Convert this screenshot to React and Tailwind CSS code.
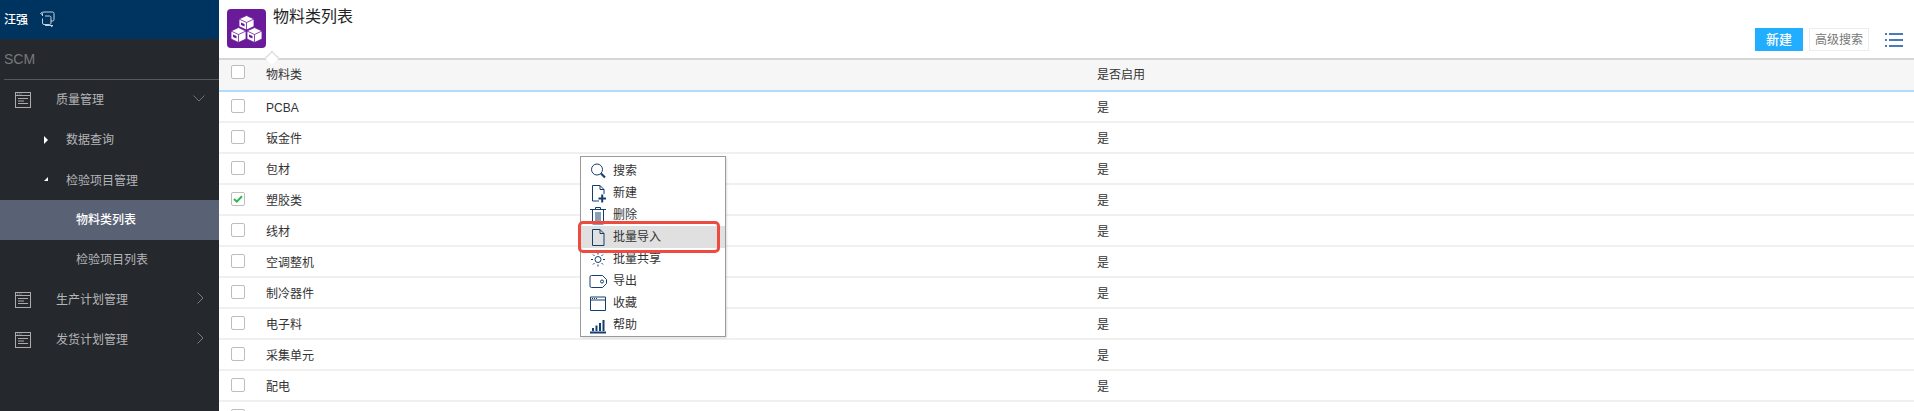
import React from "react";

const font = "font-['Liberation_Sans','Noto_Sans_CJK_SC',sans-serif]";

const rows = [
  { name: "PCBA" },
  { name: "钣金件" },
  { name: "包材" },
  { name: "塑胶类", checked: true },
  { name: "线材" },
  { name: "空调整机" },
  { name: "制冷器件" },
  { name: "电子料" },
  { name: "采集单元" },
  { name: "配电" },
  { name: "" },
];

function PageIcon() {
  return (
    <svg width="16" height="16" viewBox="0 0 16 16" fill="none" stroke="#a9abad" strokeWidth="1" className="shrink-0">
      <rect x="0.5" y="0.5" width="15" height="15" />
      <path d="M0.5 3.5H15.5M2 2H2.8M3.8 2H4.6M5.6 2H6.4M3 6.5H13M3 9H9M3 11.5H13" />
    </svg>
  );
}

function Chevron({ down }) {
  return down ? (
    <svg width="12" height="7" viewBox="0 0 12 7" fill="none" stroke="#6f7276" className="absolute left-[193px] top-[95px]">
      <path d="M0.5 0.5L6 6L11.5 0.5" />
    </svg>
  ) : (
    <svg width="7" height="12" viewBox="0 0 7 12" fill="none" stroke="#7b7e82" className="absolute right-[15px] top-[12px]">
      <path d="M0.5 0.5L6 6L0.5 11.5" />
    </svg>
  );
}

function Checkbox({ checked }) {
  return (
    <div className="flex h-[14px] w-[14px] items-center justify-center rounded-[2px] border border-[#bdbdbd] bg-white">
      {checked && (
        <svg width="10" height="8" viewBox="0 0 10 8" fill="none" stroke="#2fb84f" strokeWidth="2">
          <path d="M1 4L3.8 6.6L9 1.2" />
        </svg>
      )}
    </div>
  );
}

function Sidebar() {
  return (
    <aside className="relative h-full w-[219px] shrink-0 bg-[#25282d] text-[12px] text-[#b4b5b7]">
      <div className="flex h-[39px] items-center bg-[#003460] pl-[4px] text-white">
        <span className="font-medium">汪强</span>
        <svg width="15" height="17" viewBox="0 0 15 17" fill="none" stroke="#c5d0da" strokeWidth="1" className="ml-[12px]">
          <path d="M2.5 5V2.5A1.5 1.5 0 0 1 4 1H12.5A1.5 1.5 0 0 1 14 2.5V8.5A1.5 1.5 0 0 1 12.5 10H11V12A1.5 1.5 0 0 1 9.5 13.5H4A1.5 1.5 0 0 1 2.5 12V7.5" />
          <path d="M0.5 2.5L2.5 1M0.5 2.5L3 4M5 14.5H13M13 14.5L11 16" />
          <path d="M5 5H9.5A1.5 1.5 0 0 1 11 6.5V10" />
        </svg>
      </div>
      <div className="ml-[4px] flex h-[41px] items-center border-b border-[#55585c] text-[14px] text-[#77797c]">SCM</div>
      <div className="relative flex h-[40px] items-center pl-[15px]">
        <PageIcon />
        <span className="ml-[25px]">质量管理</span>
      </div>
      <Chevron down />
      <div className="relative flex h-[40px] items-center pl-[66px]">
        <span className="absolute left-[44px] top-[16px] h-0 w-0 border-y-[4px] border-l-[4px] border-y-transparent border-l-white" />
        数据查询
      </div>
      <div className="relative flex h-[40px] items-center pl-[66px] pt-[2px]">
        <span className="absolute left-[44px] top-[17px] h-0 w-0 border-b-[4px] border-l-[4px] border-b-white border-l-transparent" />
        检验项目管理
      </div>
      <div className="flex h-[40px] items-center bg-[#596274] pl-[76px] font-medium text-white">物料类列表</div>
      <div className="flex h-[40px] items-center pl-[76px]">检验项目列表</div>
      <div className="relative flex h-[40px] items-center pl-[15px]">
        <PageIcon />
        <span className="ml-[25px]">生产计划管理</span>
        <Chevron />
      </div>
      <div className="relative flex h-[40px] items-center pl-[15px]">
        <PageIcon />
        <span className="ml-[25px]">发货计划管理</span>
        <Chevron />
      </div>
    </aside>
  );
}

function CubeLogo() {
  return (
    <div className="flex h-[39px] w-[39px] items-center justify-center rounded-[4px] bg-[#6a1b9a]">
      <svg width="33" height="28" viewBox="0 0 33 28" fill="white" stroke="#6a1b9a" strokeWidth="0.8">
        <path d="M16.5 0.5L24 4V11.5L16.5 15L9 11.5V4Z" />
        <path d="M8.5 12.5L16 16V24L8.5 27.5L1 24V16Z" />
        <path d="M24.5 12.5L32 16V24L24.5 27.5L17 24V16Z" />
        <path d="M9 4L16.5 7.5L24 4M16.5 7.5V15M1 16L8.5 19.5L16 16M8.5 19.5V27.5M17 16L24.5 19.5L32 16M24.5 19.5V27.5" fill="none" />
        <path d="M3 19.5L6.5 21V23.5L3 22ZM19 19.5L22.5 21V23.5L19 22ZM11 7.5L14.5 9V11.5L11 10Z" fill="#6a1b9a" stroke="none" />
      </svg>
    </div>
  );
}

function Header() {
  return (
    <div className="flex h-[58px] shrink-0 bg-white">
      <div className="ml-[8px] mt-[9px]">
        <CubeLogo />
      </div>
      <h1 className="ml-[7px] mt-[6px] text-[16px] leading-[22px] text-[#222]">物料类列表</h1>
      <div className="ml-auto mr-[11px] mt-[28px] flex items-start">
        <button className="h-[23px] w-[48px] bg-[#22aeff] text-[13px] font-medium text-white">新建</button>
        <button className="ml-[6px] h-[23px] w-[60px] border border-[#ededed] text-[12px] text-[#777]">高级搜索</button>
        <svg width="18" height="14" viewBox="0 0 18 14" className="ml-[16px] mt-[5px]" fill="#4a7bb9">
          <path d="M0 0H2V2H0ZM4 0H18V2H4ZM0 6H2V8H0ZM4 6H18V8H4ZM0 12H2V14H0ZM4 12H18V14H4Z" />
        </svg>
      </div>
    </div>
  );
}

function Table() {
  return (
    <div className="text-[12px] text-[#333]">
      <div className="relative flex h-[34px] items-center border-t-2 border-b-2 border-t-[#d6d6d6] border-b-[#aedcff] bg-[#f6f6f6]">
        <span className="absolute left-[48px] top-[-7px] h-[10px] w-[10px] rotate-45 border-l border-t border-[#d6d6d6] bg-white" />
        <div className="mb-[6px] w-[47px] pl-[12px]">
          <Checkbox />
        </div>
        <div className="w-[831px]">物料类</div>
        <div>是否启用</div>
      </div>
      {rows.map((row, i) => (
        <div key={i} className="flex h-[31px] border-b-2 border-[#f0f0f0] pt-[7px]">
          <div className="w-[47px] pl-[12px]">
            <Checkbox checked={row.checked} />
          </div>
          <div className="w-[831px] leading-[18px]">{row.name}</div>
          <div className="leading-[18px]">{row.name && "是"}</div>
        </div>
      ))}
    </div>
  );
}

const menuColor = "#123f6e";
const menuItems = [
  {
    label: "搜索",
    icon: (
      <>
        <circle cx="8" cy="7.5" r="5.5" />
        <path d="M12 11.5L16 15.5" strokeWidth="2.2" />
      </>
    ),
  },
  {
    label: "新建",
    icon: (
      <>
        <path d="M10 17H3.5V1.5H11L15 5.5V10M11 1.5V5.5H15" />
        <path d="M9.5 14.5H17M13.2 10.5V18.5" strokeWidth="2" />
      </>
    ),
  },
  {
    label: "删除",
    icon: <path d="M1 3.5H17M6.5 3.5V1.5H11.5V3.5M3.5 3.5V18H14.5V3.5M7 6V16M9 6V16M11 6V16" />,
  },
  { label: "批量导入", active: true, icon: <path d="M3.5 17.5H15V5.5L11 1.5H3.5ZM11 1.5V5.5H15" /> },
  {
    label: "批量共享",
    icon: (
      <>
        <circle cx="9" cy="9.5" r="3" />
        <path d="M9 2.5V4.5M9 14.5V16.5M2 9.5H4M14 9.5H16M4 4.5L5.5 6M12.5 13L14 14.5M4 14.5L5.5 13M12.5 6L14 4.5" />
      </>
    ),
  },
  {
    label: "导出",
    icon: (
      <>
        <path d="M2.5 3.5H13.5L17.5 7.5V11.5L13.5 15.5H2.5A1.5 1.5 0 0 1 1 14V5A1.5 1.5 0 0 1 2.5 3.5Z" />
        <circle cx="13" cy="9.5" r="1.5" />
      </>
    ),
  },
  {
    label: "收藏",
    icon: <path d="M1.5 3H16.5V16.5H1.5ZM1.5 6H16.5M3 4.5H4M5 4.5H6M7 4.5H8" />,
  },
  {
    label: "帮助",
    icon: <path d="M1 16.5H17M4 15V12M7.5 15V9.5M11 15V7M14.5 15V4" strokeWidth="2" />,
  },
];

function ContextMenu() {
  return (
    <div className="absolute left-[580px] top-[156px] h-[181px] w-[146px] border border-[#9a9a9a] bg-white pt-[3px] text-[12px] text-[#333] shadow-[1px_1px_2px_rgba(0,0,0,0.12)]">
      {menuItems.map((item) => (
        <div key={item.label} className={`flex h-[22px] items-center pl-[8px] ${item.active ? "bg-[#e0e0e0]" : ""}`}>
          <svg width="18" height="19" viewBox="0 0 18 19" fill="none" stroke={menuColor} strokeWidth="1">
            {item.icon}
          </svg>
          <span className="ml-[6px]">{item.label}</span>
        </div>
      ))}
      <div className="absolute left-[-3px] top-[64px] h-[32px] w-[142px] rounded-[5px] border-[3px] border-[#ee4b40]" />
    </div>
  );
}

export default function App() {
  return (
    <div className={`relative flex h-[411px] w-[1914px] overflow-hidden bg-white ${font}`}>
      <Sidebar />
      <main className="flex min-w-0 flex-1 flex-col">
        <Header />
        <Table />
      </main>
      <ContextMenu />
    </div>
  );
}
